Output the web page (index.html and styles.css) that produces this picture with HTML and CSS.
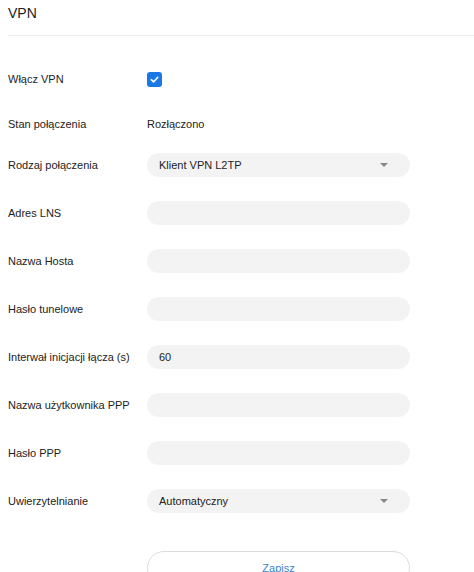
FILE: index.html
```html
<!DOCTYPE html>
<html lang="pl">
<head>
<meta charset="utf-8">
<link rel="stylesheet" href="styles.css">
</head>
<body>
<div class="page">
  <div class="header">VPN</div>
  <div class="form">
    <div class="row row-check">
      <div class="label">Włącz VPN</div>
      <div class="field">
        <span class="checkbox">
          <svg width="11" height="11" viewBox="0 0 12 12"><path d="M2.5 6.2 L5 8.6 L9.6 3.6" fill="none" stroke="#fff" stroke-width="1.7" stroke-linecap="round" stroke-linejoin="round"/></svg>
        </span>
      </div>
    </div>
    <div class="row row-status">
      <div class="label">Stan połączenia</div>
      <div class="field value">Rozłączono</div>
    </div>
    <div class="row row-type">
      <div class="label">Rodzaj połączenia</div>
      <div class="field"><div class="input select"><span>Klient VPN L2TP</span><span class="arrow"></span></div></div>
    </div>
    <div class="row">
      <div class="label">Adres LNS</div>
      <div class="field"><div class="input"></div></div>
    </div>
    <div class="row">
      <div class="label">Nazwa Hosta</div>
      <div class="field"><div class="input"></div></div>
    </div>
    <div class="row">
      <div class="label">Hasło tunelowe</div>
      <div class="field"><div class="input"></div></div>
    </div>
    <div class="row">
      <div class="label">Interwał inicjacji łącza (s)</div>
      <div class="field"><div class="input">60</div></div>
    </div>
    <div class="row">
      <div class="label">Nazwa użytkownika PPP</div>
      <div class="field"><div class="input"></div></div>
    </div>
    <div class="row">
      <div class="label">Hasło PPP</div>
      <div class="field"><div class="input"></div></div>
    </div>
    <div class="row">
      <div class="label">Uwierzytelnianie</div>
      <div class="field"><div class="input select"><span>Automatyczny</span><span class="arrow"></span></div></div>
    </div>
    <div class="row row-button">
      <div class="label"></div>
      <div class="field"><button class="save">Zapisz</button></div>
    </div>
  </div>
</div>
</body>
</html>
```
FILE: styles.css
```css
html, body {
  margin: 0;
  padding: 0;
  background: #fff;
  overflow: hidden;
}
body {
  font-family: "Liberation Sans", Arial, sans-serif;
  font-size: 11px;
  color: #222;
}
.page {
  padding: 0 0 0 8px;
}
.header {
  font-size: 14px;
  line-height: 26px;
  padding-bottom: 9px;
  border-bottom: 1px solid #ececec;
  color: #222;
}
.form {
  display: flex;
  flex-direction: column;
  gap: 24px;
  padding-top: 31px;
}
.row {
  display: flex;
  align-items: center;
  height: 24px;
}
.row-status {
  margin-top: -3px;
}
.row-type {
  margin-top: -7px;
}
.row-button {
  margin-top: 14px;
  height: 34px;
}
.label {
  width: 139px;
  flex: none;
}
.field {
  width: 263px;
  flex: none;
  display: flex;
  align-items: center;
}
.checkbox {
  width: 15px;
  height: 15px;
  border-radius: 3px;
  background: #1a78e6;
  display: flex;
  align-items: center;
  justify-content: center;
}
.input {
  width: 100%;
  height: 24px;
  border-radius: 12px;
  background: #f3f3f3;
  box-sizing: border-box;
  padding: 0 12px;
  display: flex;
  align-items: center;
  justify-content: space-between;
  color: #222;
}
.arrow {
  width: 0;
  height: 0;
  border-left: 4px solid transparent;
  border-right: 4px solid transparent;
  border-top: 4px solid #888;
  margin-right: 10px;
}
.save {
  width: 100%;
  height: 34px;
  border: 1px solid #dcdcdc;
  border-radius: 17px;
  background: #fff;
  color: #3a82c8;
  font-family: "Liberation Sans", Arial, sans-serif;
  font-size: 11px;
}
```
